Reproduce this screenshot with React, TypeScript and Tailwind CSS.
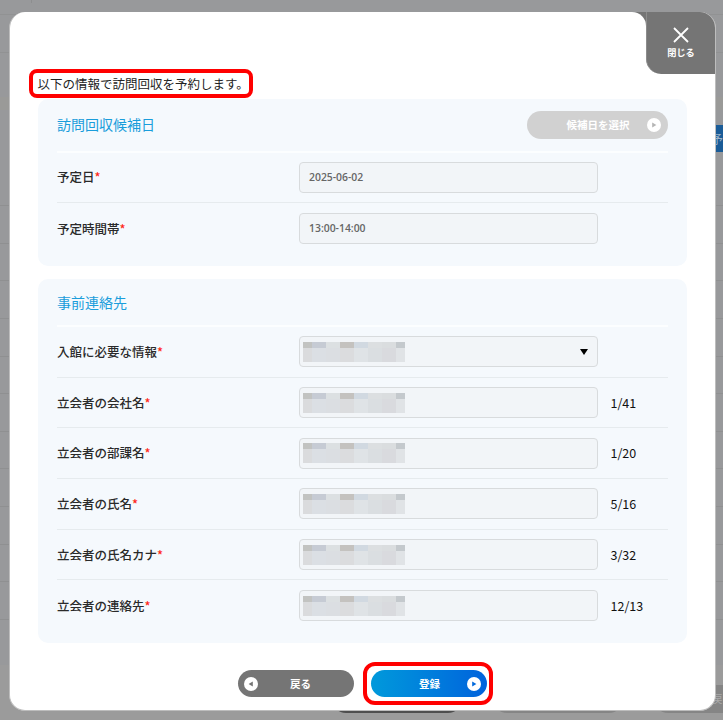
import type { ReactNode } from 'react'
import { cx } from 'class-variance-authority'

const contactFields = [
  { label: '入館に必要な情報', select: true },
  { label: '立会者の会社名', count: '1/41' },
  { label: '立会者の部課名', count: '1/20' },
  { label: '立会者の氏名', count: '5/16' },
  { label: '立会者の氏名カナ', count: '3/32' },
  { label: '立会者の連絡先', count: '12/13' }
]

// masked value: [width, top colour, bottom colour]
const maskCells = [
  [9, '#c2c3c1', '#dadbdd'],
  [14, '#c6cbd4', '#dbdfe4'],
  [14, '#dce0e2', '#dbdee2'],
  [14, '#c4c2bf', '#dbdcde'],
  [14, '#d1d9e1', '#dfe3e6'],
  [14, '#dcdfe1', '#dadee1'],
  [14, '#dadddf', '#d9dade'],
  [9, '#c4c9cd', '#e0e3e6']
] as const

function MaskedValue() {
  return (
    <div className="-ml-[6.5px] flex h-5">
      {maskCells.map(([width, top, bottom], index) => (
        <div key={index} className="flex flex-col" style={{ width }}>
          <div className="h-[6px]" style={{ backgroundColor: top }} />
          <div className="h-[14px]" style={{ backgroundColor: bottom }} />
        </div>
      ))}
    </div>
  )
}

function ArrowDot({ direction = 'right', className }: { direction?: 'left' | 'right'; className: string }) {
  return (
    <svg viewBox="0 0 14 14" className={cx('h-[14px] w-[14px] shrink-0', direction === 'left' && 'rotate-180', className)} aria-hidden="true">
      <circle cx="7" cy="7" r="7" fill="#fff" />
      <path d="M5.2 4.6v4.8L9.4 7z" fill="currentColor" />
    </svg>
  )
}

function FormRow({ label, count, last = false, children }: { label: string; count?: string; last?: boolean; children: ReactNode }) {
  return (
    <div className={cx('flex h-[50.7px] items-center', !last && 'border-b-[1.5px] border-[#e6ebee]')}>
      <div className="w-[242px] shrink-0 text-[12.5px] leading-5 font-medium text-[#2a2a2a]">
        {label}
        <span className="text-[#ff2a1a]">*</span>
      </div>
      <div className="flex h-[31px] w-[299px] shrink-0 items-center rounded-[4px] border border-[#d8dbdd] bg-[#f2f5f8] px-[9px] font-['Open_Sans','Noto_Sans_CJK_JP',sans-serif] text-[10.4px] font-semibold text-[#666]">
        {children}
      </div>
      {count ? <span className="ml-[12.5px] text-[12.5px] leading-5 text-[#111]">{count}</span> : null}
    </div>
  )
}

function Backdrop() {
  return (
    <div className="h-[720px] overflow-hidden bg-[#9b9b9b]">
      <div className="h-[15px] border-b border-[#919293] bg-[#98999b]">
        <div className="ml-[31px] h-[3px] w-px bg-[#8d8e8f]" />
      </div>
      <div className="h-[38px] border-b border-[#919293] bg-[#98999b]" />
      <div className="h-[44px] bg-[#98999b]" />
      <div className="h-[13px] bg-[#9a9a98]" />
      <div className="flex h-[96px] items-start justify-end border-b border-[#8f9091] bg-[#98999b] pt-[15px]">
        <div className="flex h-[27px] w-[12px] items-center bg-[#1a5c98] text-[12px] leading-none text-[#9cb3c8]">
          <span className="shrink-0">予</span>
        </div>
      </div>
      {Array.from({ length: 11 }, (_, index) => (
        <div key={index} className="h-[37.65px] border-b border-[#8f9091] bg-[#98999b]" />
      ))}
      <div className="h-[45px] bg-[#98999b]" />
      <div className="h-[20px]" />
      <div className="flex h-[28px] gap-[31px] pl-[332px] text-[10.5px] text-[#aaa]">
        <div className="h-[28px] w-[130px] shrink-0 rounded-full bg-[#4e4e4e]" />
        <div className="h-[28px] w-[130px] shrink-0 rounded-full bg-[#858585]" />
        <div className="flex h-[28px] w-[69px] shrink-0 items-center rounded-l-full bg-[#858585] pl-[58px]">戻</div>
      </div>
    </div>
  )
}

export default function App() {
  return (
    <div className="relative h-[720px] w-[723px] overflow-hidden font-['Noto_Sans_CJK_JP',sans-serif]">
      <Backdrop />

      <section className="absolute top-[12px] left-[9px] flex h-[699px] w-[707px] flex-col overflow-hidden rounded-[16px] border-x border-b border-[#bdbdbd] bg-white" role="dialog" aria-modal="true">
        <div className="flex h-[62px] shrink-0 bg-[#757575]">
          <div className="flex-1 rounded-tr-[14px] bg-white" />
          <div className="w-[69px] bg-white">
            <button type="button" className="flex h-[62px] w-full flex-col items-center rounded-bl-[15px] border-l border-[#8c8c8c] bg-[#757575] pt-[15px] text-white">
              <svg viewBox="0 0 16 16" className="h-4 w-4" fill="none" stroke="currentColor" strokeWidth="1.8" aria-hidden="true">
                <path d="M1 1l14 14M15 1L1 15" />
              </svg>
              <span className="mt-[2px] text-[9.2px] leading-[14px] font-bold">閉じる</span>
            </button>
          </div>
        </div>

        <p className="ml-[27.5px] h-[25px] text-[12.5px] leading-5 text-[#222]">以下の情報で訪問回収を予約します。</p>

        <div className="mx-auto h-[167px] w-[649px] shrink-0 rounded-[10px] bg-[#f5f9fd] px-[19px]">
          <div className="flex h-[53.5px] items-center justify-between border-b-2 border-[#fcfeff]">
            <h2 className="text-[14px] font-normal text-[#1a9ddb]">訪問回収候補日</h2>
            <button type="button" className="flex h-7 w-[141px] items-center justify-end rounded-full bg-[#d1d1d1] pr-[7px] text-white">
              <span className="text-[10.5px] leading-4 font-bold">候補日を選択</span>
              <ArrowDot className="ml-[17.5px] text-[#b5b5b5]" />
            </button>
          </div>
          <FormRow label="予定日">2025-06-02</FormRow>
          <FormRow label="予定時間帯" last>13:00-14:00</FormRow>
        </div>

        <div className="mx-auto mt-[13px] h-[364px] w-[649px] shrink-0 rounded-[10px] bg-[#f5f9fd] px-[19px]">
          <div className="flex h-[48px] items-center border-b-2 border-[#fcfeff]">
            <h2 className="text-[14px] font-normal text-[#1a9ddb]">事前連絡先</h2>
          </div>
          {contactFields.map((field, index) => (
            <FormRow key={field.label} label={field.label} count={field.count} last={index === contactFields.length - 1}>
              <MaskedValue />
              {field.select ? (
                <svg viewBox="0 0 8 6" className="ml-auto h-[6px] w-2" aria-hidden="true">
                  <path d="M0 0h8L4 6z" fill="#000" />
                </svg>
              ) : null}
            </FormRow>
          ))}
        </div>

        <div className="mt-[27px] ml-[228px] flex gap-[17px] text-[10.5px] font-bold text-white">
          <button type="button" className="flex h-[27px] w-[116px] items-center rounded-full bg-[#757575] pl-[6px]">
            <ArrowDot direction="left" className="text-[#757575]" />
            <span className="ml-[32px] leading-4">戻る</span>
          </button>
          <button type="button" className="flex h-[27px] w-[116px] items-center justify-end rounded-full bg-linear-to-r from-[#0099db] to-[#0062dc] pr-[6px]">
            <span className="mr-[27px] leading-4">登録</span>
            <ArrowDot className="text-[#0068dc]" />
          </button>
        </div>
      </section>

      {/* callouts */}
      <div className="absolute top-[69px] left-[29px] h-[29px] w-[224px] rounded-[8px] border-[4px] border-[#ff0000]" />
      <div className="absolute top-[662px] left-[363px] h-[43px] w-[130px] rounded-[12px] border-[4px] border-[#ff0000]" />
    </div>
  )
}
